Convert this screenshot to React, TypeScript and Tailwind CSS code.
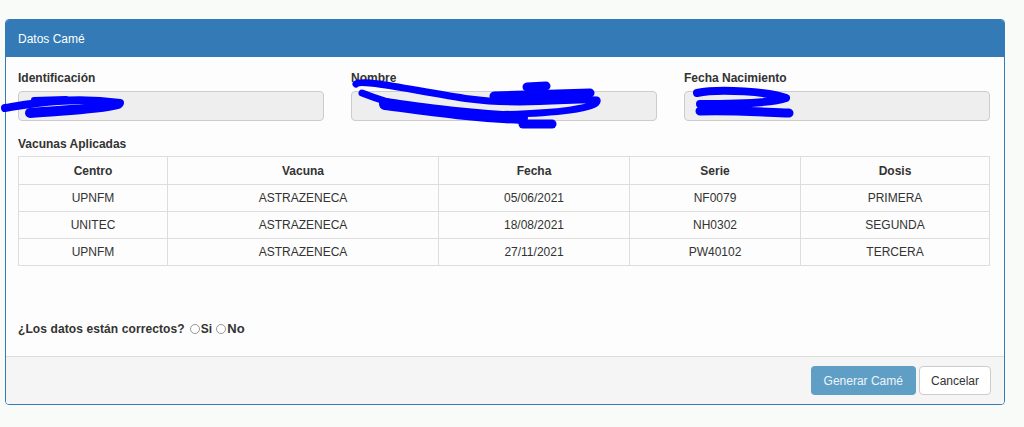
const ROWS = [
  { centro: "UPNFM", vacuna: "ASTRAZENECA", fecha: "05/06/2021", serie: "NF0079", dosis: "PRIMERA" },
  { centro: "UNITEC", vacuna: "ASTRAZENECA", fecha: "18/08/2021", serie: "NH0302", dosis: "SEGUNDA" },
  { centro: "UPNFM", vacuna: "ASTRAZENECA", fecha: "27/11/2021", serie: "PW40102", dosis: "TERCERA" },
];

const FIELDS = ["Identificación", "Nombre", "Fecha Nacimiento"];

function Scribbles() {
  // redaction marks drawn over the personal data
  return (
    <svg
      className="absolute left-0 top-0 pointer-events-none"
      width="1024"
      height="427"
      viewBox="0 0 1024 427"
      fill="none"
      stroke="#0000ff"
      strokeLinecap="round"
      strokeLinejoin="round"
    >
      <path d="M5 108 C30 104, 70 96, 120 103" strokeWidth="8" />
      <path d="M30 113 C60 110, 95 110, 118 104" strokeWidth="10" />
      <path d="M34 100 L66 99" strokeWidth="6" />

      <path
        d="M356 84 C362 78, 420 92, 470 99 C520 106, 580 98, 597 100 C600 108, 560 114, 480 115 C420 114, 385 102, 362 93"
        strokeWidth="7"
      />
      <path d="M494 96 L590 93" strokeWidth="9" />
      <path d="M527 87 L546 86" strokeWidth="9" />
      <path d="M523 124 L552 124" strokeWidth="9" />
      <path d="M385 104 C430 110, 470 116, 522 118" strokeWidth="12" />

      <path d="M697 93 C720 88, 770 92, 786 98 C770 104, 725 104, 700 104" strokeWidth="8" />
      <path d="M700 111 C730 110, 760 112, 789 113" strokeWidth="9" />
    </svg>
  );
}

export default function App() {
  return (
    <main className="relative w-[1024px] h-[427px] bg-[#f9fbf9] pt-[19px] px-[5px] font-['Liberation_Sans',Arial,sans-serif] text-[12px] text-[#333]">
      <div className="w-[1000px] border border-[#337ab7] rounded-[4px] overflow-hidden bg-[#fcfdfc]">
        <div className="h-[37px] bg-[#337ab7] text-white flex items-center px-[12px] text-[12px]">
          Datos Camé
        </div>

        <div className="pl-[12px] pr-[14px] pt-[13px] pb-[19px]">
          <div className="grid grid-cols-3 gap-x-[27px]">
            {FIELDS.map((f) => (
              <div key={f}>
                <div className="font-bold leading-4 mb-[5px]">{f}</div>
                <div className="h-[30px] bg-[#eee] border border-[#ccc] rounded-[4px]" />
              </div>
            ))}
          </div>

          <div className="font-bold leading-4 mt-[15px] mb-[4px]">Vacunas Aplicadas</div>
          <table className="w-full table-fixed border-collapse text-center">
            <colgroup>
              <col className="w-[149px]" />
              <col className="w-[271px]" />
              <col className="w-[191px]" />
              <col className="w-[171px]" />
              <col />
            </colgroup>
            <thead>
              <tr className="h-[28px]">
                {["Centro", "Vacuna", "Fecha", "Serie", "Dosis"].map((h) => (
                  <th key={h} className="border border-[#ddd] font-bold">
                    {h}
                  </th>
                ))}
              </tr>
            </thead>
            <tbody>
              {ROWS.map((r, i) => (
                <tr key={i} className="h-[27px]">
                  <td className="border border-[#ddd]">{r.centro}</td>
                  <td className="border border-[#ddd]">{r.vacuna}</td>
                  <td className="border border-[#ddd]">{r.fecha}</td>
                  <td className="border border-[#ddd]">{r.serie}</td>
                  <td className="border border-[#ddd]">{r.dosis}</td>
                </tr>
              ))}
            </tbody>
          </table>

          <div className="mt-[55px] leading-4 font-bold flex items-center tracking-[0.1px]">
            <span>¿Los datos están correctos?</span>
            <span className="ml-[5px] w-[10px] h-[10px] rounded-full border border-[#999] bg-white" />
            <span className="ml-[1px]">Si</span>
            <span className="ml-[4px] w-[10px] h-[10px] rounded-full border border-[#999] bg-white" />
            <span className="ml-[1px] text-[13px]">No</span>
          </div>
        </div>

        <div className="h-[48px] bg-[#f5f5f5] border-t border-[#ddd] flex items-center justify-end gap-[3px] pr-[13px]">
          <button className="h-[29px] px-[13px] rounded-[4px] bg-[#5f9fc6] text-[#eef4f9] text-[12px]">
            Generar Camé
          </button>
          <button className="h-[29px] px-[11px] rounded-[4px] bg-white border border-[#ccc] text-[#333] text-[12px]">
            Cancelar
          </button>
        </div>
      </div>
      <Scribbles />
    </main>
  );
}
